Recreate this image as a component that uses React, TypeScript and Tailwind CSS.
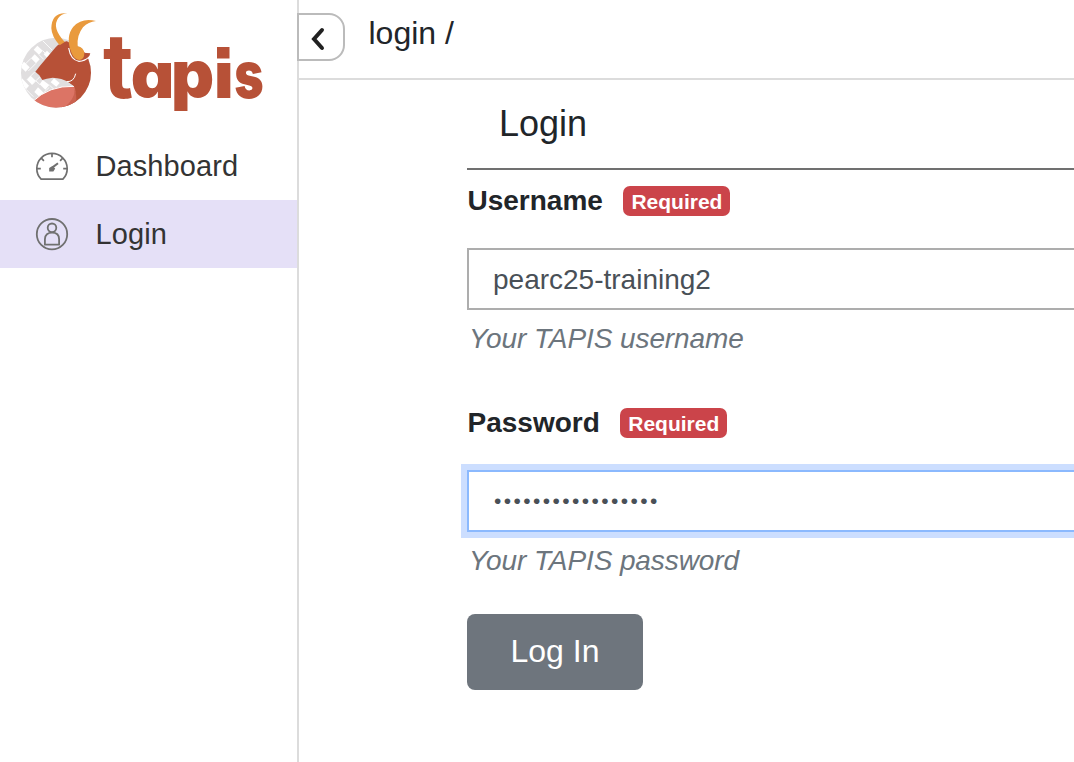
import React from "react";

function BullMark() {
  return (
    <svg viewBox="0 0 300 360" className="h-[120px] w-[100px] shrink-0">
      <defs>
        <clipPath id="disc">
          <circle cx="138" cy="218" r="105" />
        </clipPath>
      </defs>
      <g clipPath="url(#disc)">
        <rect x="30" y="110" width="216" height="216" fill="#e0dedf" />
        <g fill="#fff">
          <path d="M82 137L98 152L87 164L71 149Z" />
          <path d="M74 163L89 178L78 190L63 175Z" />
          <path d="M111 152L121 162L111 173L101 163Z" />
          <path d="M42 185L59 202L47 215L30 199Z" />
          <path d="M62 227L77 242L66 254L51 239Z" />
          <path d="M36 235L57 257L48 268L30 249Z" />
          <path d="M98 240L118 255L106 269L89 253Z" />
          <path d="M84 262L101 278L90 292L73 276Z" />
          <path d="M132 235L149 249L139 260L122 247Z" />
        </g>
        <path d="M98 152L112 166M87 164L101 178M98 122L126 150M63 175L40 198M78 190L55 213M51 239L74 216M66 254L90 230M48 268L70 290M77 242L90 254M101 278L118 262M118 255L134 270" fill="none" stroke="#fff" strokeWidth="2.5" />
        <path d="M170 124 L242 160 L250 330 L150 330 L192 258 L172 244 Z" fill="#b75137" />
        <path d="M66 306 Q118 256 192 259 Q208 288 162 330 L80 335 Z" fill="#dc7465" />
        <path d="M190 259 Q203 288 164 322 Q192 317 199 299 Q199 276 190 259Z" fill="#cb6250" />
        <path d="M66 306 Q118 256 192 259" fill="none" stroke="#fff" strokeWidth="3" />
      </g>
      <path d="M170 124 L176 128 Q182 168 204 181 Q226 182 240 161 Q236 174 230 180 Q245 220 236 254 L192 258 L176 247 Q156 234 128 233 Q108 235 97 240 L88 226 L76 215 L90 197 L137 142 Q150 128 170 124Z" fill="#b75137" />
      <path d="M170 245 Q192 246 197 221" fill="none" stroke="#fff" strokeWidth="3" />
      <path d="M176 144 Q182 180 207 184 Q224 184 238 170" fill="none" stroke="#fff" strokeWidth="3.5" />
      <path d="M220 158 L241 160 Q237 173 224 177Z" fill="#b75137" />
      <path d="M172 40 Q125 35 124 85 Q125 110 149 136 L164 126 Q124 82 145 54 Q153 42 172 40Z" fill="#e99a3d" />
      <path d="M258 63 Q216 52 190 80 Q165 110 185 160 Q193 180 209 180 Q223 178 223 160 Q221 142 203 139 Q200 106 219 82 Q235 65 258 63Z" fill="#e99a3d" />
    </svg>
  );
}

function Wordmark() {
  return (
    <svg
      viewBox="0 0 164 120"
      className="h-[120px] w-[164px] shrink-0 overflow-visible [font-feature-settings:'cv11']"
      fontSize="65"
      fontWeight="900"
      fontFamily="Inter, sans-serif"
      fill="#b75137"
    >
      <text transform="translate(-7 97.5) scale(1.27 1.38)" fontWeight="700">t</text>
      <text transform="translate(20.8 97.5) scale(1.04 1)">a</text>
      <text transform="translate(61 97.5) scale(1.03 1.02)">p</text>
      <text transform="translate(104 97.5) scale(1.02 0.98)">i</text>
      <text transform="translate(124.2 97.5) scale(0.77 1)">s</text>
      <rect x="103" y="44" width="20" height="17" fill="#fff" />
      <rect x="107" y="47" width="12.5" height="11.5" />
    </svg>
  );
}

function GaugeIcon() {
  return (
    <svg viewBox="0 0 34 34" className="size-[34px] shrink-0" fill="none" stroke="#707070" strokeWidth="1.7">
      <path d="M6.1 30.2 A15.2 15.2 0 1 1 27.9 30.2 Z" strokeLinejoin="round" />
      <path d="M17 4.5V8.3M6.3 9.2L8.9 11.8M27.7 9.2L25.1 11.8M2 19.7H5.8M28.2 19.7H32" />
      <path d="M23 14.2L17.5 18.4" strokeWidth="2" />
      <path d="M14.2 22.4V18.9L17.3 16.9L20.2 19.6L18.4 22.4Z" fill="#707070" stroke="none" />
    </svg>
  );
}

function UserIcon() {
  return (
    <svg viewBox="0 0 34 34" className="size-[34px] shrink-0" fill="none" stroke="#707070" strokeWidth="1.8">
      <circle cx="17" cy="17.2" r="15.2" />
      <circle cx="17" cy="10.8" r="4.3" />
      <path d="M9.9 27.7V22.2C9.9 17.7 13 15.7 17 15.7S24.1 17.7 24.1 22.2V27.7Z" strokeLinejoin="round" />
    </svg>
  );
}

function Badge() {
  return (
    <span className="flex h-[30px] w-[107px] items-center justify-center rounded-[7px] bg-[#cb444a] pt-px text-[21px] font-bold leading-none text-white">
      Required
    </span>
  );
}

export default function App() {
  return (
    <div className="flex h-[762px] w-[1074px] overflow-hidden bg-white font-['Liberation_Sans',Arial,sans-serif] text-[#212529]">
      <aside className="flex w-[299px] shrink-0 flex-col border-r-2 border-[#dcdcdc] text-[29px] text-[#333]">
        <div className="flex h-[132px] pl-[10px]">
          <BullMark />
          <Wordmark />
        </div>
        <nav>
          <div className="flex h-[68px] items-center gap-[26.5px] pl-[35px]">
            <GaugeIcon />
            <span className="pt-[2px] tracking-[0.08px]">Dashboard</span>
          </div>
          <div className="flex h-[68px] items-center gap-[26.5px] bg-[#e5e0f7] pl-[35px]">
            <UserIcon />
            <span className="pt-[2px] tracking-[0.08px]">Login</span>
          </div>
        </nav>
      </aside>
      <div className="flex min-w-0 flex-1 flex-col">
        <header className="flex h-[80px] shrink-0 items-start border-b-2 border-[#dcdcdc]">
          <button className="-ml-[2px] mt-[13px] flex h-[48px] w-[48px] items-center rounded-r-[16px] border-2 border-[#bbb] bg-white">
            <svg viewBox="0 0 16 24" className="ml-[10.5px] mt-[3px] h-[24px] w-[16px]" fill="none" stroke="#212121" strokeWidth="4" strokeLinecap="round" strokeLinejoin="miter">
              <path d="M12 3L4 12L12 21" />
            </svg>
          </button>
          <div className="ml-[23.5px] mt-[15px] text-[32px] leading-[36px]">login /</div>
        </header>
        <main className="ml-[168px] flex flex-col">
          <h1 className="flex h-[90px] items-center border-b-2 border-[#707070] pl-[32px] text-[36px]">Login</h1>
          <form className="flex flex-col" onSubmit={(e: React.FormEvent) => e.preventDefault()}>
            <div className="mt-[16px] flex h-[30px] items-center gap-[20.5px] pl-[0.5px]">
              <label className="text-[28px] font-bold leading-[30px]">Username</label>
              <Badge />
            </div>
            <div className="mt-[32px] flex h-[62px] items-center border-2 border-r-0 border-[#adadad] pl-[24px] pt-[1px] text-[28px] text-[#495057]">
              pearc25-training2
            </div>
            <div className="mt-[12px] h-[34px] pl-[2px] text-[28px] italic leading-[34px] tracking-[-0.09px] text-[#6c757d]">Your TAPIS username</div>
            <div className="mt-[52px] flex h-[30px] items-center gap-[20.5px] pl-[0.5px]">
              <label className="text-[28px] font-bold leading-[30px]">Password</label>
              <Badge />
            </div>
            <div className="mt-[32px] flex h-[62px] items-center border-2 border-r-0 border-[#8bb9fe] pl-[25px] text-[21px] tracking-[2.4px] text-[#495057] shadow-[0_0_0_6px_#ccdeff]">
              •••••••••••••••••
            </div>
            <div className="mt-[12px] h-[34px] pl-[2px] text-[28px] italic leading-[34px] tracking-[-0.1px] text-[#6c757d]">Your TAPIS password</div>
            <button className="mt-[36px] h-[76px] w-[176px] rounded-[8px] bg-[#6e757d] pb-[2px] text-[32px] text-white">Log In</button>
          </form>
        </main>
      </div>
    </div>
  );
}
